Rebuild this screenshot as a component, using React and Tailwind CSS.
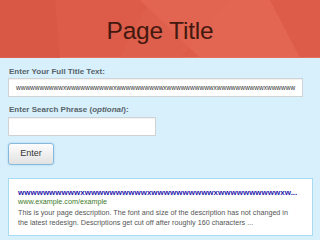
export default function App() {
  const f = { fontFamily: '"Liberation Sans", Arial, sans-serif' };
  return (
    <div className="w-[320px] h-[240px] overflow-hidden bg-[#d8f0fb]" style={f}>
      <div className="relative h-[58px] bg-[#dd5c49] flex items-center justify-center border-b border-[#e4705e]">
        <svg className="absolute inset-0" width="320" height="58" viewBox="0 0 320 58">
          <polygon points="0,0 55,0 60,58 0,58" fill="#d75543" opacity="0.6" />
          <polygon points="140,0 270,0 300,58 200,58" fill="#e46b56" opacity="0.7" />
          <polygon points="150,0 230,0 180,58 120,58" fill="#e06450" opacity="0.5" />
        </svg>
        <div className="relative text-[24.5px] leading-none text-[#43180f] pt-[6px] tracking-[-0.2px]">Page Title</div>
      </div>
      <div className="px-2 pt-[8px] flex flex-col items-start">
        <div className="h-[11px] leading-[11px] text-[8px] font-bold text-[#57636b] pl-[1px]">Enter Your Full Title Text:</div>
        <div className="mt-[1px] w-[295px] h-[19px] bg-white border border-[#cfd3d5] shadow-[inset_0_1px_1px_rgba(0,0,0,0.06)] flex items-center pl-[7px]">
          <span className="whitespace-nowrap text-[6.5px] text-[#333]">wwwwwwwwwwxwwwwwwwwwwxwwwwwwwwwwxwwwwwwwwwwxwwwwwwwwwwxwwwwww</span>
        </div>
        <div className="mt-[7px] h-[11px] leading-[11px] text-[8px] font-bold text-[#57636b] pl-[1px]">
          Enter Search Phrase (<span className="italic">optional</span>):
        </div>
        <div className="mt-[2px] w-[148px] h-[19px] bg-white border border-[#cfd3d5] shadow-[inset_0_1px_1px_rgba(0,0,0,0.06)]" />
        <div className="mt-[7px] w-[46px] h-[22px] rounded-[3px] border border-[#86b9db] shadow-[0_0_2px_#9cc9e8] bg-gradient-to-b from-[#fdfdfd] to-[#e2e2e2] flex items-center justify-center text-[9px] text-[#333]">
          Enter
        </div>
        <div className="mt-[13px] w-[305px] h-[58px] bg-white border border-[#a6dbf1] pl-[9px] pt-[9px]">
          <div className="whitespace-nowrap text-[8px] leading-[10px] font-bold text-[#2a1aaa]">
            wwwwwwwwwwxwwwwwwwwwwxwwwwwwwwwwxwwwwwwwwwwxw...
          </div>
          <div className="text-[7.2px] leading-[8px] text-[#3d7a2a] whitespace-nowrap">www.example.com/example</div>
          <div className="mt-[2px] text-[7.2px] leading-[10px] text-[#555] whitespace-nowrap">
            <div>This is your page description. The font and size of the description has not changed in</div>
            <div>the latest redesign. Descriptions get cut off after roughly 160 characters ...</div>
          </div>
        </div>
      </div>
    </div>
  );
}
